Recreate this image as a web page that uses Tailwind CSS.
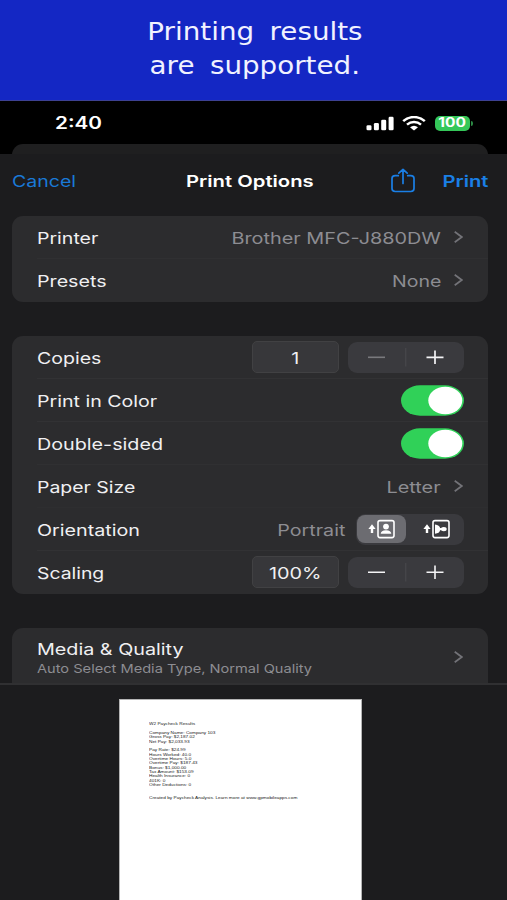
<!DOCTYPE html>
<html lang="en">
<head>
<meta charset="utf-8">
<title>Print Options</title>
<script src="https://cdn.jsdelivr.net/npm/@tailwindcss/browser@4"></script>
</head>
<body class="w-[507px] h-[900px] overflow-hidden bg-[#1c1c1e] font-['Inter',sans-serif] flex flex-col text-[16px] whitespace-nowrap">

<header class="h-[101px] shrink-0 bg-[#1427c4] border-b border-[#3d4192] pt-[15px] flex flex-col items-center text-[#f1f2ff] font-['DejaVu_Sans',sans-serif] text-[25px] leading-[33.5px] [word-spacing:6px]">
  <div class="scale-x-[1.11] ml-[2px]">Printing results</div>
  <div class="scale-x-[1.11] ml-[2px]">are supported.</div>
</header>

<!-- status bar -->
<div class="h-[53px] shrink-0 bg-black relative">
  <div class="absolute left-3 top-[43px] w-[476px] h-[11px] rounded-t-[12px] bg-[#1f1f20]"></div>
  <div class="flex items-center h-[44px] pl-[55px] pr-[37px] justify-between">
    <span class="text-white font-semibold text-[17px] origin-left scale-x-[1.22] pt-[2px]">2:40</span>
    <div class="flex items-center">
      <svg class="w-[28px] h-[15px]" viewBox="0 0 28 15" fill="#fff"><rect x="0.5" y="9.3" width="5" height="5" rx="1.3"/><rect x="7.9" y="7" width="5" height="7.3" rx="1.3"/><rect x="15.2" y="3.8" width="5" height="10.5" rx="1.3"/><rect x="22.6" y="0.8" width="5" height="13.5" rx="1.3"/></svg>
      <svg class="w-[24px] h-[15px] ml-[8px]" viewBox="0 0 24 15" fill="none" stroke="#fff"><path d="M1.2 5.2C7 -0.3 17 -0.3 22.8 5.2" stroke-width="2.5"/><path d="M5 8.7C9 5.1 15 5.1 19 8.7" stroke-width="2.4"/><path d="M8 11.3Q12 8.3 16 11.3L12 14.4Z" fill="#fff" stroke="none"/></svg>
      <div class="ml-[9px] w-[35px] h-[15px] rounded-[5px] bg-[#35c759] flex items-center justify-center"><span class="text-white font-bold text-[12.5px] leading-none scale-x-[1.24] pt-px">100</span></div>
      <div class="w-[2px] h-[5px] ml-px -mr-[3px] rounded-r-full bg-[#2b8a44]"></div>
    </div>
  </div>
</div>

<!-- navigation bar -->
<nav class="h-[62px] shrink-0 px-[12px] pb-[8px] flex items-center bg-[#1c1c1e] relative">
  <span class="text-[#1a79d6] origin-left scale-x-[1.22] w-[174px]">Cancel</span>
  <span class="text-white font-semibold origin-left scale-x-[1.265] w-[204px]">Print Options</span>
  <svg class="w-[26px] h-[25px] -mt-[2px]" viewBox="0 0 26 25" fill="none" stroke="#1a7fe6" stroke-width="1.7" stroke-linecap="round" stroke-linejoin="round"><path d="M8.3 7.7H5.2Q2 7.7 2 10.6V20.6Q2 23.5 5.2 23.5H20.8Q24 23.5 24 20.6V10.6Q24 7.7 20.8 7.7H17.7M13 15.4V1.5M8.8 5.2L13 1.3L17.2 5.2"/></svg>
  <span class="text-[#1a7fe6] font-semibold origin-right scale-x-[1.26] ml-auto mr-[7px]">Print</span>
</nav>

<main class="h-[467px] shrink-0 px-[12px] pr-[19px] overflow-hidden text-[#f0f0f2]">
  <section class="rounded-[11px] bg-[#2c2c2e] pl-[25px]">
    <div class="h-[43px] border-b border-[#303032] pr-[25px] flex items-center">
      <span class="origin-left scale-x-[1.22] pt-px">Printer</span>
      <span class="ml-auto origin-right scale-x-[1.24] pt-px text-[#8d8d92]">Brother MFC-J880DW</span>
      <svg class="w-[9px] h-[12px] ml-[13px]" viewBox="0 0 9 12" fill="none" stroke="#737378" stroke-width="1.7"><path d="M.7 .8L7.8 6L.7 11.2"/></svg>
    </div>
    <div class="h-[43px] pr-[25px] pb-px flex items-center">
      <span class="origin-left scale-x-[1.23] pt-px">Presets</span>
      <span class="ml-auto origin-right scale-x-[1.22] pt-px text-[#8d8d92]">None</span>
      <svg class="w-[9px] h-[12px] ml-[13px]" viewBox="0 0 9 12" fill="none" stroke="#737378" stroke-width="1.7"><path d="M.7 .8L7.8 6L.7 11.2"/></svg>
    </div>
  </section>

  <section class="mt-[34px] rounded-[11px] bg-[#2c2c2e] pl-[25px]">
    <div class="h-[43px] border-b border-[#323234] pr-[24px] flex items-center">
      <span class="origin-left scale-x-[1.22] pt-px">Copies</span>
      <div class="ml-auto w-[87px] h-[32px] rounded-[5px] bg-[#37373a] border border-[#414143] flex items-center justify-center"><span class="scale-x-[1.23] pt-px">1</span></div>
      <div class="ml-[9px] w-[116px] h-[31px] rounded-[9px] bg-[#3a3a3e] flex items-center">
        <svg class="w-full h-[31px]" viewBox="0 0 116 31"><path d="M20 15.3H37" stroke="#79797d" stroke-width="1.6"/><path d="M57.8 6V24.5" stroke="#4b4b4f" stroke-width="1"/><path d="M78.5 15.3H95.5M87 8.5V22" stroke="#f4f4f6" stroke-width="1.7"/></svg>
      </div>
    </div>
    <div class="h-[43px] border-b border-[#323234] pr-[24px] flex items-center">
      <span class="origin-left scale-x-[1.225] pt-px">Print in Color</span>
      <svg class="ml-auto w-[63px] h-[31px]" viewBox="0 0 63 31"><rect y=".3" width="63" height="30.4" rx="19" ry="15.2" fill="#30d158"/><ellipse cx="44.3" cy="15.5" rx="17" ry="13.7" fill="#fff"/></svg>
    </div>
    <div class="h-[43px] border-b border-[#303032] pr-[24px] flex items-center">
      <span class="origin-left scale-x-[1.233] pt-px">Double-sided</span>
      <svg class="ml-auto w-[63px] h-[31px]" viewBox="0 0 63 31"><rect y=".3" width="63" height="30.4" rx="19" ry="15.2" fill="#30d158"/><ellipse cx="44.3" cy="15.5" rx="17" ry="13.7" fill="#fff"/></svg>
    </div>
    <div class="h-[43px] border-b border-[#2e2e30] pr-[25px] flex items-center">
      <span class="origin-left scale-x-[1.215] pt-px">Paper Size</span>
      <span class="ml-auto origin-right scale-x-[1.24] pt-px text-[#8d8d92]">Letter</span>
      <svg class="w-[9px] h-[12px] ml-[13px]" viewBox="0 0 9 12" fill="none" stroke="#737378" stroke-width="1.7"><path d="M.7 .8L7.8 6L.7 11.2"/></svg>
    </div>
    <div class="h-[43px] border-b border-[#323234] pr-[24px] flex items-center">
      <span class="origin-left scale-x-[1.232] pt-px">Orientation</span>
      <span class="ml-auto origin-right scale-x-[1.23] pt-px text-[#8d8d92]">Portrait</span>
      <div class="ml-[11px] w-[108px] h-[31px] rounded-[9px] bg-[#3a3a3e] flex items-center p-px">
        <div class="w-[49px] h-[28px] rounded-[8px] bg-[#6c6c71] flex items-center justify-center">
          <svg class="w-[27px] h-[20px]" viewBox="0 0 27 20"><path d="M4 5.3L7.6 9.9H5.2V14H2.8V9.9H.4Z" fill="#fff"/><rect x="10" y="1.6" width="16" height="17" rx="2" fill="none" stroke="#fff" stroke-width="1.6"/><ellipse cx="18" cy="7.6" rx="2.9" ry="2.9" fill="#fff"/><path d="M12.7 14.7Q12.9 11.5 18 11.3Q23.1 11.5 23.3 14.7Z" fill="#fff"/></svg>
        </div>
        <div class="w-[57px] flex items-center justify-center pl-[3px]">
          <svg class="w-[27px] h-[20px]" viewBox="0 0 27 20"><path d="M4 5.3L7.6 9.9H5.2V14H2.8V9.9H.4Z" fill="#fff"/><rect x="10" y="1.6" width="16" height="17" rx="2" fill="none" stroke="#fff" stroke-width="1.6"/><ellipse cx="20.8" cy="10.1" rx="2.9" ry="2.2" fill="#fff"/><path d="M12 5.5Q16.6 6 17.1 9L19 9.2V11L17.1 11.2Q16.6 14.2 12 14.7Z" fill="#fff"/></svg>
        </div>
      </div>
    </div>
    <div class="h-[43px] pr-[24px] pb-px flex items-center">
      <span class="origin-left scale-x-[1.21] pt-px">Scaling</span>
      <div class="ml-auto w-[87px] h-[32px] rounded-[5px] bg-[#37373a] border border-[#414143] flex items-center justify-center"><span class="scale-x-[1.24] pt-px">100%</span></div>
      <div class="ml-[9px] w-[116px] h-[31px] rounded-[9px] bg-[#3a3a3e] flex items-center">
        <svg class="w-full h-[31px]" viewBox="0 0 116 31"><path d="M20 15.3H37M78.5 15.3H95.5M87 8.5V22" stroke="#f4f4f6" stroke-width="1.6"/><path d="M57.8 6V24.5" stroke="#4b4b4f" stroke-width="1"/></svg>
      </div>
    </div>
  </section>

  <section class="mt-[34px] h-[70px] rounded-t-[11px] bg-[#2c2c2e] pl-[25px] pr-[25px] pt-[10px] flex justify-between">
    <div>
      <div class="origin-left scale-x-[1.234] w-fit leading-[22px]">Media &amp; Quality</div>
      <div class="origin-left scale-x-[1.218] w-fit leading-[17px] text-[12px] text-[#8d8d92]">Auto Select Media Type, Normal Quality</div>
    </div>
    <svg class="w-[9px] h-[12px] mt-[13px]" viewBox="0 0 9 12" fill="none" stroke="#737378" stroke-width="1.7"><path d="M.7 .8L7.8 6L.7 11.2"/></svg>
  </section>
</main>

<!-- page preview -->
<div class="grow border-t-2 border-[#303032] bg-[#1c1c1e] pt-[14px] pl-[119px]">
  <div class="w-[243px] h-[201px] bg-white border border-b-0 border-[#b5b5b5] pl-[28.5px] pt-[22.3px] font-['Liberation_Sans',sans-serif] text-[4px] leading-[4.35px] text-[#222]">
    <div class="origin-left scale-x-[1.185] w-fit">
      <p>W2 Paycheck Results</p>
      <p class="mt-[4.35px]">Company Name: Company 103</p>
      <p>Gross Pay: $2,187.02</p>
      <p>Net Pay: $2,033.93</p>
      <p class="mt-[4.35px]">Pay Rate: $24.99</p>
      <p>Hours Worked: 40.0</p>
      <p>Overtime Hours: 5.0</p>
      <p>Overtime Pay: $187.43</p>
      <p>Bonus: $1,000.00</p>
      <p>Tax Amount: $153.09</p>
      <p>Health Insurance: 0</p>
      <p>401K: 0</p>
      <p>Other Deductions: 0</p>
      <p class="mt-[8.7px]">Created by Paycheck Analysis. Learn more at www.gpmobileapps.com</p>
    </div>
  </div>
</div>
</body>
</html>
